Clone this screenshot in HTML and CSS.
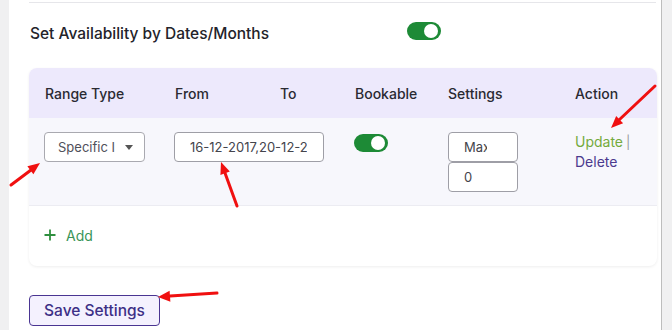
FILE: index.html
```html
<!DOCTYPE html>
<html lang="en">
<head>
    <meta charset="UTF-8">
    <meta name="viewport" content="width=device-width, initial-scale=1.0">
    <title>Availability</title>
    <link rel="stylesheet" href="styles.css">
</head>
<body>
    <div class="panel">
        <div class="rule"></div>

        <div class="setting">
            <p class="setting-label">Set Availability by Dates/Months</p>
            <span class="toggle"></span>
        </div>

        <!-- ranges table -->
        <div class="card">
            <div class="thead">
                <span>Range Type</span>
                <span>From</span>
                <span>To</span>
                <span>Bookable</span>
                <span>Settings</span>
                <span>Action</span>
            </div>
            <div class="trow">
                <div class="select"><span>Specific I</span><i class="caret"></i></div>
                <input type="text" class="field dates" value="16-12-2017,20-12-2017">
                <div><span class="toggle small"></span></div>
                <div class="stack">
                    <input type="text" class="field small-field max" value="Max">
                    <input type="text" class="field small-field" value="0">
                </div>
                <div class="actions">
                    <a class="update">Update</a><span class="sep">|</span><br>
                    <a class="delete">Delete</a>
                </div>
            </div>
            <div class="add">
                <svg width="12" height="12" viewBox="0 0 12 12"><path d="M6 0.5v11M0.5 6h11" stroke="#2f8f3f" stroke-width="1.8"/></svg>
                <span>Add</span>
            </div>
        </div>

        <button type="button" class="save">Save Settings</button>
    </div>

    <!-- annotation arrows -->
    <svg class="arrows" width="672" height="330" viewBox="0 0 672 330">
        <g stroke="#f01010" stroke-width="3" stroke-linecap="round" fill="#f01010">
            <line x1="11" y1="185" x2="31" y2="170"/>
            <line x1="237" y1="206" x2="225" y2="173"/>
            <line x1="655" y1="86" x2="619" y2="120"/>
            <line x1="217" y1="293" x2="170" y2="296"/>
        </g>
        <g fill="#f01010">
            <polygon points="40,163 33.4,174.2 27.4,166.3"/>
            <polygon points="221,162 229.8,171.6 220.4,175"/>
            <polygon points="611,128 623.1,123.3 616.2,116.1"/>
            <polygon points="158,297 170.4,301.7 169.6,290.7"/>
        </g>
    </svg>
</body>
</html>
```

FILE: styles.css
```css
body{
    margin: 0;
    background-color: #f0f0f1;
    font-family: Inter, "Noto Sans", sans-serif;
    color: #2a2a30;
}
.panel{
    margin-left: 9px;
    width: 628px;
    height: 330px;
    padding: 0 4px 0 20px;
    background-color: #fff;
    border-right: 1px solid #bdbdbd;
}
.rule{
    height: 2px;
    border-bottom: 1px solid #e6e6ea;
    margin-right: 1px;
}
.setting{
    display: flex;
    align-items: center;
    margin-top: 19px;
    height: 18px;
}
.setting-label{
    margin: 0;
    width: 377px;
    padding: 5px 0 0 1px;
    font-size: 15.5px;
    font-weight: 500;
    color: #23232a;
}
.toggle{
    display: inline-block;
    position: relative;
    width: 34px;
    height: 18px;
    border-radius: 9px;
    background-color: #1d8a36;
}
.toggle::after{
    content: "";
    position: absolute;
    right: 3px;
    top: 2px;
    width: 14px;
    height: 14px;
    border-radius: 50%;
    background-color: #fff;
}

/* table card */
.card{
    margin-top: 28px;
    border-radius: 8px;
    overflow: hidden;
    box-shadow: 0 1px 3px rgba(0, 0, 0, 0.07);
}
.thead,
.trow{
    display: grid;
    grid-template-columns: 130px 105px 75px 93px 127px 1fr;
    padding-left: 15px;
}
.thead{
    height: 50px;
    padding-left: 16px;
    align-items: center;
    background-color: #ede9fc;
    font-size: 14px;
    font-weight: 500;
    color: #2a2a32;
}
.trow{
    align-items: start;
    padding-top: 14px;
    padding-bottom: 13px;
    background-color: #f7f7fc;
    border-bottom: 1px solid #ececf2;
}
.select{
    display: flex;
    align-items: center;
    justify-content: space-between;
    width: 101px;
    height: 30px;
    box-sizing: border-box;
    padding: 0 11px 0 13px;
    background-color: #fff;
    border: 1px solid #a9a9b0;
    border-radius: 4px;
    font-size: 13px;
    color: #50505a;
}
.caret{
    width: 0;
    height: 0;
    border-left: 4px solid transparent;
    border-right: 4px solid transparent;
    border-top: 5px solid #555;
}
.field{
    height: 30px;
    box-sizing: border-box;
    margin: 0;
    background-color: #fff;
    border: 1px solid #9e9ea6;
    border-radius: 4px;
    font-family: Inter, "Noto Sans", sans-serif;
    font-size: 13px;
    color: #44444c;
}
.dates{
    grid-column: span 2;
    width: 150px;
    padding: 0 16px 0 15px;
}
.toggle.small{
    margin-top: 2px;
}
.stack{
    display: flex;
    flex-direction: column;
    margin-left: 1px;
}
.small-field{
    width: 70px;
    padding: 0 8px 0 15px;
}
.max{
    padding-right: 30px;
}
.actions{
    margin-left: 1px;
    font-size: 14px;
    line-height: 20px;
}
.update{
    color: #74aa3c;
}
.sep{
    margin-left: 3px;
    color: #9a9aa0;
    font-size: 13px;
}
.delete{
    color: #4b3a8e;
}
.add{
    display: flex;
    align-items: center;
    gap: 10px;
    height: 58px;
    padding-left: 15px;
    padding-bottom: 2px;
    font-size: 14px;
    color: #3a9558;
}
button.save{
    margin-top: 29px;
    width: 131px;
    height: 31px;
    padding: 0;
    background-color: #f4f1fe;
    border: 1px solid #4a3592;
    border-radius: 4px;
    font-family: Inter, "Noto Sans", sans-serif;
    font-size: 15.5px;
    font-weight: 500;
    color: #3d2f86;
}
.arrows{
    position: absolute;
    left: 0;
    top: 0;
    pointer-events: none;
}
```
